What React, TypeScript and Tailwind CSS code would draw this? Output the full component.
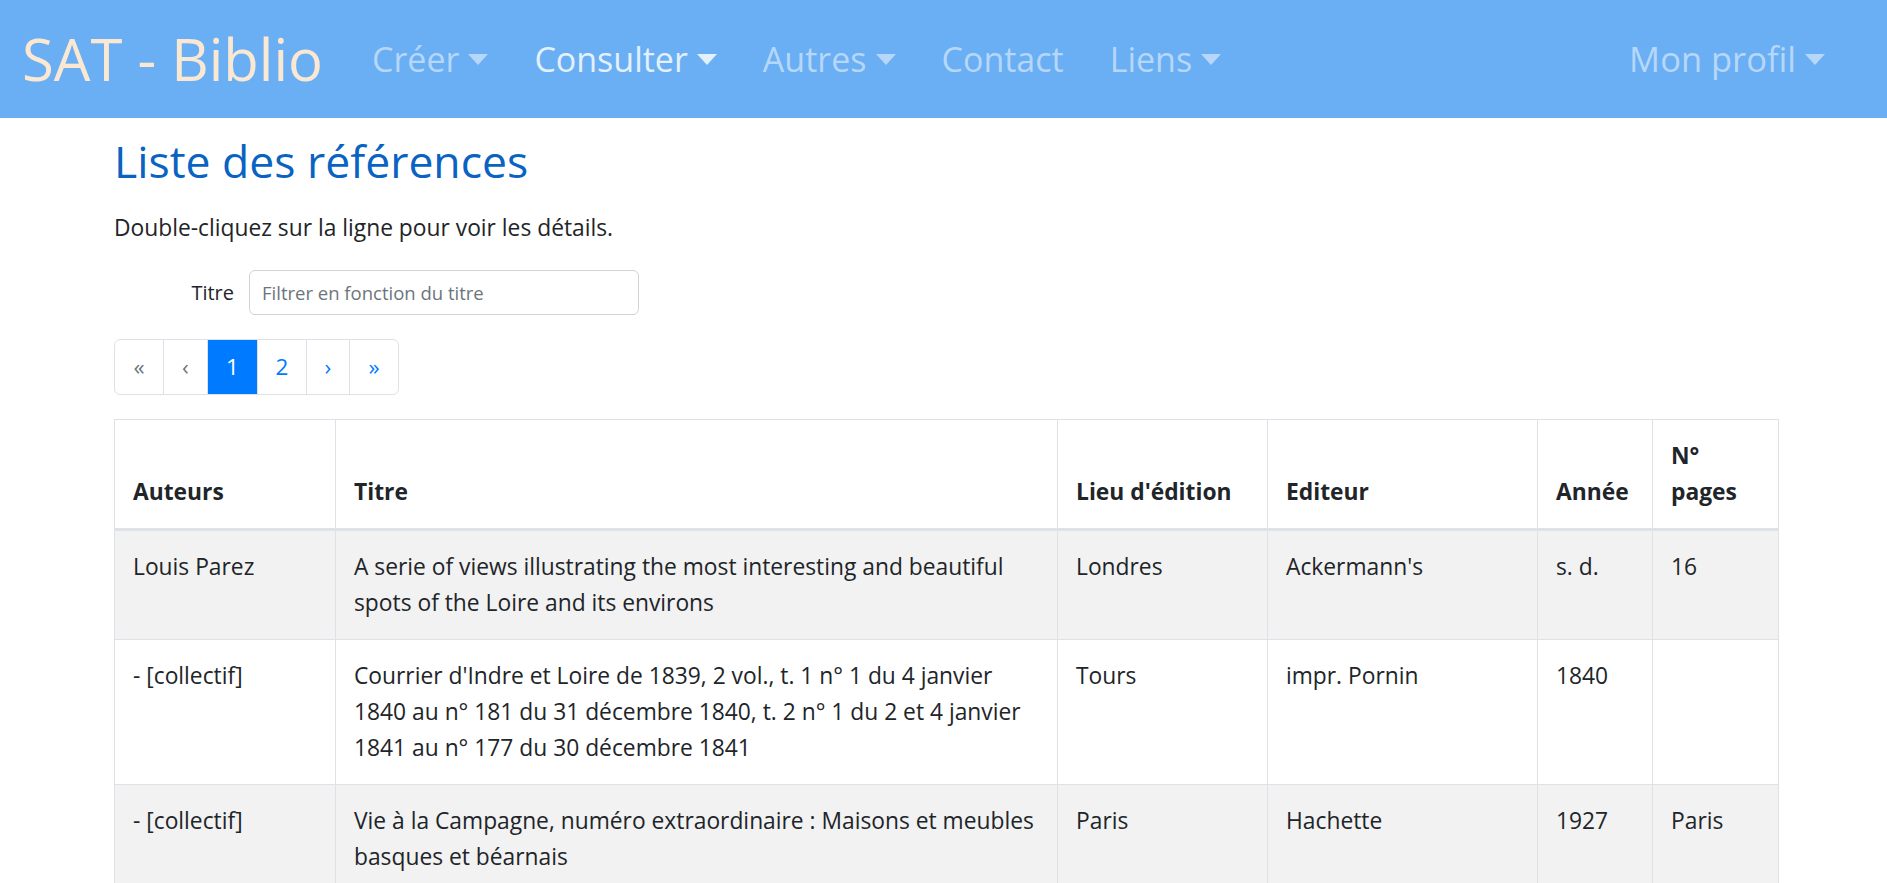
import React from 'react';

const navItems = [
  { label: 'Créer', caret: true, active: false },
  { label: 'Consulter', caret: true, active: true },
  { label: 'Autres', caret: true, active: false },
  { label: 'Contact', caret: false, active: false },
  { label: 'Liens', caret: true, active: false },
];

const rows = [
  {
    auteurs: 'Louis Parez',
    titre: 'A serie of views illustrating the most interesting and beautiful spots of the Loire and its environs',
    lieu: 'Londres',
    editeur: "Ackermann's",
    annee: 's. d.',
    pages: '16',
  },
  {
    auteurs: '- [collectif]',
    titre:
      "Courrier d'Indre et Loire de 1839, 2 vol., t. 1 n° 1 du 4 janvier 1840 au n° 181 du 31 décembre 1840, t. 2 n° 1 du 2 et 4 janvier 1841 au n° 177 du 30 décembre 1841",
    lieu: 'Tours',
    editeur: 'impr. Pornin',
    annee: '1840',
    pages: '',
  },
  {
    auteurs: '- [collectif]',
    titre: 'Vie à la Campagne, numéro extraordinaire : Maisons et meubles basques et béarnais',
    lieu: 'Paris',
    editeur: 'Hachette',
    annee: '1927',
    pages: 'Paris',
  },
];

const Caret = () => (
  <span className="ml-[9px] inline-block w-0 h-0 border-x-[10px] border-t-[11px] border-x-transparent border-t-current align-[0.2em]" />
);

const Navbar: React.FC = () => (
  <nav className="h-[118px] bg-[#6aaff3] flex items-center pl-[22px] pr-[62px]">
    <a className="text-[58px] leading-none text-[#fbe8d2] whitespace-nowrap">SAT - Biblio</a>
    <ul className="flex items-center gap-[46px] ml-[49px]">
      {navItems.map((item) => (
        <li
          key={item.label}
          className={`text-[34px] leading-none whitespace-nowrap ${item.active ? 'text-[#e3f0fd]' : 'text-[#b6d7f9]'}`}
        >
          {item.label}
          {item.caret && <Caret />}
        </li>
      ))}
    </ul>
    <div className="ml-auto text-[34.5px] leading-none text-[#b6d7f9] whitespace-nowrap">
      Mon profil
      <Caret />
    </div>
  </nav>
);

const Pagination: React.FC = () => {
  const base = 'h-[56px] flex items-center justify-center border border-[#dee2e6] -ml-px first:ml-0 text-[22.5px]';
  return (
    <ul className="flex">
      <li className={`${base} w-[50px] rounded-l-[6px] text-[#6c757d]`}>«</li>
      <li className={`${base} w-[45px] text-[#6c757d]`}>‹</li>
      <li className={`${base} w-[51px] bg-[#007bff] border-[#007bff] text-white z-10`}>1</li>
      <li className={`${base} w-[50px] text-[#007bff]`}>2</li>
      <li className={`${base} w-[44px] text-[#007bff]`}>›</li>
      <li className={`${base} w-[50px] rounded-r-[6px] text-[#007bff]`}>»</li>
    </ul>
  );
};

const th = 'border border-[#dee2e6] border-b-[3px] px-[18px] py-[18px] text-left align-bottom font-bold';
const td = 'border border-[#dee2e6] px-[18px] py-[18px] align-top';

export default function App() {
  return (
    <div className="min-h-screen bg-white text-[#212529] text-[22.8px] leading-[36px]" style={{ fontFamily: '"Open Sans", "Noto Sans", sans-serif' }}>
      <Navbar />
      <main className="ml-[114px] w-[1664px]">
        <h2 className="mt-[17px] text-[44.5px] leading-[52px] font-medium text-[#0863c2]">Liste des références</h2>
        <p className="mt-[23px] mb-[24px]">Double-cliquez sur la ligne pour voir les détails.</p>
        <div className="flex items-center h-[45px] mb-[24px]">
          <label className="w-[135px] pr-[15px] text-right text-[20px]">Titre</label>
          <input
            className="w-[390px] h-[45px] border border-[#ced4da] rounded-[6px] px-[12px] text-[18.5px] placeholder:text-[#6c757d] outline-none"
            placeholder="Filtrer en fonction du titre"
          />
        </div>
        <Pagination />
        <table className="mt-[24px] w-[1664px] table-fixed border-collapse">
          <colgroup>
            <col className="w-[221px]" />
            <col className="w-[722px]" />
            <col className="w-[210px]" />
            <col className="w-[270px]" />
            <col className="w-[115px]" />
            <col className="w-[126px]" />
          </colgroup>
          <thead>
            <tr>
              <th className={th}>Auteurs</th>
              <th className={th}>Titre</th>
              <th className={th}>Lieu d'édition</th>
              <th className={th}>Editeur</th>
              <th className={th}>Année</th>
              <th className={th}>N° pages</th>
            </tr>
          </thead>
          <tbody>
            {rows.map((r, i) => (
              <tr key={i} className={i % 2 === 0 ? 'bg-[#f2f2f2]' : 'bg-white'}>
                <td className={td}>{r.auteurs}</td>
                <td className={td}>{r.titre}</td>
                <td className={td}>{r.lieu}</td>
                <td className={td}>{r.editeur}</td>
                <td className={td}>{r.annee}</td>
                <td className={td}>{r.pages}</td>
              </tr>
            ))}
          </tbody>
        </table>
      </main>
    </div>
  );
}
